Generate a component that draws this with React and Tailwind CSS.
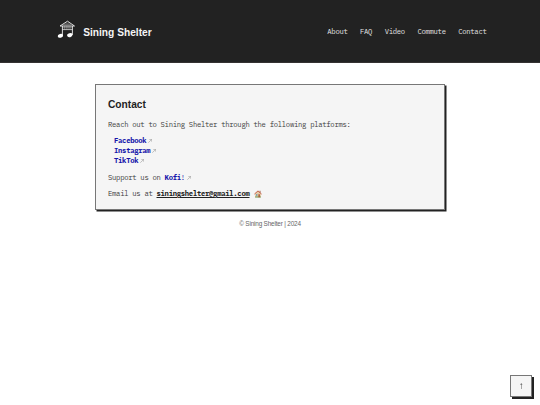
const navItems = ['About', 'FAQ', 'Video', 'Commute', 'Contact'];
const platforms = ['Facebook', 'Instagram', 'TikTok'];

function Logo() {
  return (
    <svg className="mb-[3px] h-[19px] w-[20px] shrink-0" viewBox="0 0 20 19" fill="none" stroke="#eeeeee">
      <path d="M4 6 11.5 1.2 18.5 6Z" strokeWidth="0.9" />
      <path d="M7.2 4.6h8.2M9.2 3.2h4.4" strokeWidth="0.5" opacity="0.7" />
      <path d="M6.4 6v9.6M16.4 6v9" strokeWidth="0.9" />
      <path d="M6.4 9.6h10" strokeWidth="0.9" opacity="0.8" />
      <path d="M8.4 6v3.5M10.2 6v3.5M12 6v3.5M14 6v3.5M6.4 7.7h10" strokeWidth="0.5" opacity="0.7" />
      <ellipse cx="4.4" cy="15.8" rx="2.7" ry="1.9" transform="rotate(-14 4.4 15.8)" fill="#fff" stroke="none" />
      <ellipse cx="13.8" cy="15.2" rx="2.7" ry="2" transform="rotate(-14 13.8 15.2)" fill="#fff" stroke="none" />
    </svg>
  );
}

function ExternalArrow() {
  return (
    <svg className="ml-[2px] inline-block h-[4px] w-[4px] align-baseline" viewBox="0 0 4 4" fill="none" stroke="#999999" strokeWidth="0.6">
      <path d="M.3 3.7 3.6.5M1.3.4h2.4v2.3" />
    </svg>
  );
}

function House() {
  return (
    <svg className="ml-[4px] inline-block h-[8px] w-[8px] align-[-1.5px]" viewBox="0 0 8 8">
      <path d="M1.1 3.6 4 1l2.9 2.6v3.7H1.1Z" fill="#e6c9a6" />
      <path d="M1.1 6.5h5.8v1H1.1Z" fill="#719550" />
      <path d="M2 4.3h1.4v1.5H2Z" fill="#5d9bb5" />
      <path d="M4.4 4.3h1.5v3H4.4Z" fill="#a85b37" />
      <path d="M5.6.8h.9v2h-.9Z" fill="#9b5948" />
      <path d="M.4 4.1 4 .9l3.6 3.2" fill="none" stroke="#bd5138" strokeWidth="0.9" />
    </svg>
  );
}

export default function App() {
  return (
    <div className="flex h-screen flex-col bg-white font-['IBM_Plex_Mono','Liberation_Mono',monospace] text-[7.2px] leading-[10px] tracking-[-0.27px] text-[#3b3b3b]">
      <header className="flex h-[63px] shrink-0 items-center justify-between border-b border-[#353232] bg-[#222] pr-[53.5px] pl-[56px]">
        <div className="flex items-center">
          <Logo />
          <span className="mt-[3px] ml-[7.2px] font-['Liberation_Sans',sans-serif] text-[10.2px] leading-[12px] font-bold tracking-normal text-[#f5f5f5]">Sining Shelter</span>
        </div>
        <nav className="mt-[2px] flex gap-[12.5px] text-[#e5e5e5]">
          {navItems.map((item) => <a key={item}>{item}</a>)}
        </nav>
      </header>
      <main className="mt-[21px] ml-[95px] h-[126px] w-[350px] shrink-0 border border-[#777] bg-[#f5f5f5] px-[12px] pt-[13px] shadow-[1.5px_1.5px_0_#222]">
        <h1 className="font-['Liberation_Sans',sans-serif] text-[10.2px] leading-[13px] font-bold tracking-normal text-[#222]">Contact</h1>
        <p className="mt-[9px]">Reach out to Sining Shelter through the following platforms:</p>
        <ul className="mt-[6px] pl-[6px]">
          {platforms.map((name) => (
            <li key={name} className="h-[10px]">
              <a className="font-bold text-[#1515aa]">{name}</a><ExternalArrow />
            </li>
          ))}
        </ul>
        <p className="mt-[7px]">Support us on <a className="text-[#1515aa]"><b>Kofi</b>!</a><ExternalArrow /></p>
        <p className="mt-[6px]">Email us at <a className="font-bold text-[#222] underline">siningshelter@gmail.com</a><House /></p>
      </main>
      <footer className="mt-[9px] text-center font-['Liberation_Sans',sans-serif] text-[6.4px] tracking-[-0.18px] text-[#666]">© Sining Shelter | 2024</footer>
      <button className="fixed right-[8px] bottom-[8px] flex h-[22px] w-[22px] items-center justify-center border border-[#777] bg-[#f5f5f5] font-['Liberation_Sans',sans-serif] text-[10px] leading-none text-[#333] shadow-[2px_2px_0_#222]">↑</button>
    </div>
  );
}
